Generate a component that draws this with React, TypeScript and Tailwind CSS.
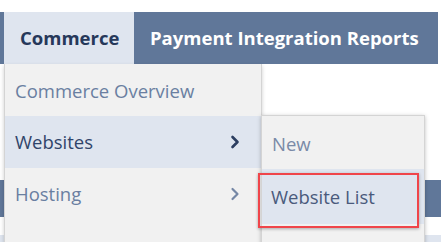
import React from 'react';

const Chevron = ({ color, width }: { color: string; width: number }) => (
    <svg width="10" height="14" viewBox="0 0 10 14" className="shrink-0">
        <polyline points="2.5,2 7.5,7 2.5,12" fill="none" stroke={color} strokeWidth={width} strokeLinecap="round" strokeLinejoin="round" />
    </svg>
);

export default function App() {
    return (
        <div className="relative w-[441px] h-[242px] bg-white overflow-hidden" style={{ fontFamily: '"Open Sans", "Noto Sans", sans-serif' }}>
            {/* Top nav */}
            <div className="h-3" />
            <nav className="flex h-[52px] w-[438px] bg-[#607799] pl-1">
                <div className="flex items-center pl-4 bg-[#dfe5ef] text-[18.5px] font-bold text-[#26385a] w-[130px]">
                    Commerce
                </div>
                <div className="flex items-center pl-[16px] text-[18.5px] font-bold text-white whitespace-nowrap">
                    Payment Integration Reports
                </div>
            </nav>

            {/* Page content behind the menu */}
            <div className="mt-[116px] h-[37px] bg-[#607799]" />
            <div className="mt-[18px] h-[7px] bg-[#dfe5ef]" />

            {/* Dropdown */}
            <div className="absolute left-1 top-[64px] w-[258px] h-[190px] bg-[#f1f1f1] border-x border-[#d4d4d4] shadow-[0_2px_4px_rgba(0,0,0,0.2)]">
                <div className="h-[52px] flex items-center pl-[10px] pt-[2px] text-[18.5px] text-[#6a7fa1] whitespace-nowrap">
                    Commerce Overview
                </div>
                <div className="h-[52px] flex items-center justify-between pl-[10px] pr-[21px] text-[18.5px] text-[#30446a] bg-[#dfe5ef]">
                    <span>Websites</span>
                    <Chevron color="#2c3e60" width={2.6} />
                </div>
                <div className="h-[52px] flex items-center justify-between pl-[10px] pr-[21px] text-[18.5px] text-[#6a7fa1]">
                    <span>Hosting</span>
                    <Chevron color="#7587a5" width={2.2} />
                </div>

                {/* Submenu */}
                <div className="absolute left-[256px] top-[51px] w-[164px] h-[140px] bg-[#f1f1f1] border border-[#d4d4d4] shadow-[0_1px_4px_rgba(0,0,0,0.25)]">
                    <div className="h-[53px] flex items-center pl-[10px] pt-[2px] text-[18.5px] text-[#7a8aa7]">
                        New
                    </div>
                    <div className="relative h-[55px] flex items-center pl-[9px] text-[18.5px] text-[#4a5a7c] bg-[#dfe5ef]">
                        <span>Website List</span>
                        <div className="absolute -left-[4px] top-[4px] w-[161px] h-[55px] border-[2.5px] border-[#f0454a] shadow-[0_1px_3px_rgba(0,0,0,0.3)]" />
                    </div>
                </div>
            </div>
        </div>
    );
}
